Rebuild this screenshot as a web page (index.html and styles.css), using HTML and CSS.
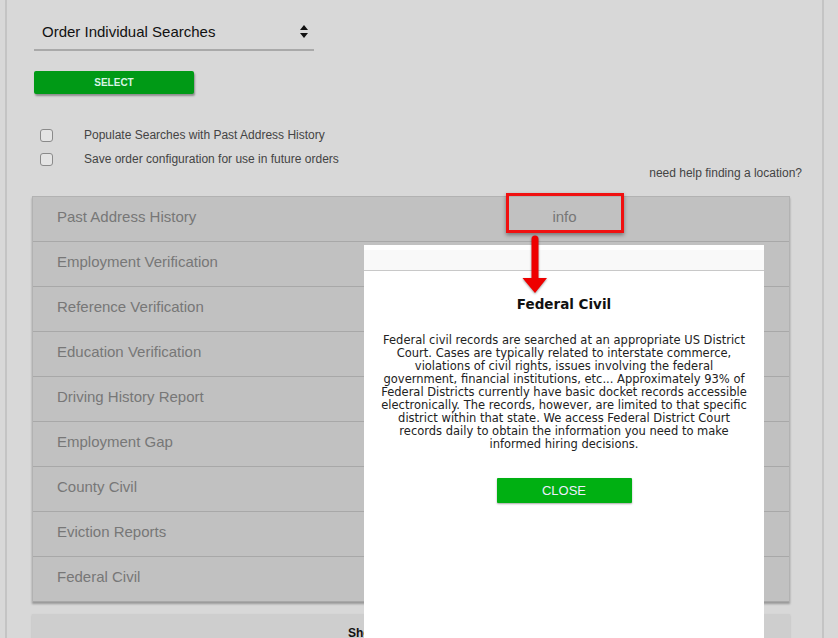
FILE: index.html
```html
<!DOCTYPE html>
<html lang="en">
<head>
  <meta charset="UTF-8" />
  <title>Order Searches</title>
  <link rel="stylesheet" href="styles.css">
</head>
<body>
  <div class="page">
    <div class="order-select">
      <span>Order Individual Searches</span>
      <svg class="select-arrows" width="8" height="13" viewBox="0 0 8 13">
        <path d="M4 0L8 5H0z M4 13L0 8h8z" fill="#111"/>
      </svg>
    </div>
    <button class="select-btn">SELECT</button>

    <div class="options">
      <label class="option"><span class="check"></span>Populate Searches with Past Address History</label>
      <label class="option"><span class="check"></span>Save order configuration for use in future orders</label>
    </div>
    <div class="help">need help finding a location?</div>

    <div class="searches">
      <div class="search-row"><span>Past Address History</span><span class="info">info</span></div>
      <div class="search-row"><span>Employment Verification</span></div>
      <div class="search-row"><span>Reference Verification</span></div>
      <div class="search-row"><span>Education Verification</span></div>
      <div class="search-row"><span>Driving History Report</span></div>
      <div class="search-row"><span>Employment Gap</span></div>
      <div class="search-row"><span>County Civil</span></div>
      <div class="search-row"><span>Eviction Reports</span></div>
      <div class="search-row"><span>Federal Civil</span></div>
    </div>

    <div class="summary">Show Order Summary</div>
  </div>

  <div class="modal">
    <div class="modal-head"></div>
    <h3 class="modal-title">Federal Civil</h3>
    <p class="modal-text">Federal civil records are searched at an appropriate US District Court. Cases are typically related to interstate commerce, violations of civil rights, issues involving the federal government, financial institutions, etc... Approximately 93% of Federal Districts currently have basic docket records accessible electronically. The records, however, are limited to that specific district within that state. We access Federal District Court records daily to obtain the information you need to make informed hiring decisions.</p>
    <button class="close-btn">CLOSE</button>
  </div>

  <div class="callout"></div>
  <svg class="callout-arrow" width="26" height="62" viewBox="0 0 26 62">
    <path d="M9.5 5a3.5 3.5 0 0 1 7 0V44h8.5L13 59 0.5 44h9z" fill="#ee0000"/>
  </svg>
</body>
</html>
```

FILE: styles.css
```css
body {
  margin: 0;
  background: #d8d8d8;
  font-family: 'Liberation Sans', Arial, sans-serif;
  overflow: hidden;
}
.page {
  margin-left: 5px;
  width: 758px;
  min-height: 700px;
  padding: 14px 32px 0 25px;
  border-left: 2px solid #c4c4c4;
  border-right: 2px solid #c4c4c4;
}
.order-select {
  margin-left: 2px;
  width: 264px;
  height: 35px;
  padding: 0 8px;
  border-bottom: 2px solid #a9a9a9;
  display: flex;
  align-items: center;
  justify-content: space-between;
  font-size: 15px;
  color: #111;
}
.select-arrows {
  margin-right: -2px;
}
.select-btn {
  display: block;
  margin: 20px 0 0 2px;
  width: 160px;
  height: 23px;
  border: none;
  border-radius: 2px;
  background: #009a16;
  color: #d8f4e4;
  font-family: 'Liberation Sans', Arial, sans-serif;
  font-size: 10px;
  font-weight: bold;
  box-shadow: 1px 2px 2px rgba(0,0,0,0.35);
}
.options {
  margin-top: 29px;
}
.option {
  display: flex;
  align-items: center;
  height: 24px;
  font-size: 12px;
  color: #444;
}
.check {
  width: 11px;
  height: 11px;
  margin: 0 31px 0 8px;
  border: 1px solid #8a8a8a;
  border-radius: 3px;
  background: #e4e4e4;
}
.help {
  margin: -7px -12px 0 0;
  line-height: 18px;
  text-align: right;
  font-size: 12px;
  color: #444;
}
.searches {
  margin-top: 14px;
  background: #c1c1c1;
  border: 1px solid #b2b2b2;
  border-bottom: none;
  box-shadow: 0 2px 2px rgba(0,0,0,0.3);
}
.search-row {
  display: grid;
  grid-template-columns: 307px 1fr;
  align-items: center;
  height: 39px;
  padding: 0 0 5px 24px;
  border-bottom: 1px solid #a8a8a8;
  font-size: 15px;
  color: #777;
}
.info {
  text-align: center;
  margin-left: -24px;
}
.summary {
  margin-top: 12px;
  height: 40px;
  padding-top: 12px;
  background: #cecece;
  box-shadow: 0 1px 2px rgba(0,0,0,0.15);
  text-align: center;
  font-size: 12px;
  font-weight: bold;
  color: #111;
  box-sizing: border-box;
}
.callout {
  position: absolute;
  left: 506px;
  top: 193px;
  width: 112px;
  height: 34px;
  border: 3px solid #f01010;
  box-shadow: 0 2px 4px rgba(0,0,0,0.4);
}
.callout-arrow {
  position: absolute;
  left: 522px;
  top: 234px;
  filter: drop-shadow(0 1px 1px rgba(0,0,0,0.4));
}
.modal {
  position: absolute;
  left: 364px;
  top: 245px;
  width: 400px;
  height: 420px;
  background: #fff;
  text-align: center;
}
.modal-head {
  height: 20px;
  margin-top: 5px;
  background: #f9f9f9;
  border-bottom: 1px solid #c8c8c8;
}
.modal-title {
  margin: 25px 0 0;
  font-family: 'DejaVu Sans', Verdana, sans-serif;
  font-size: 13.5px;
  font-weight: bold;
  color: #111;
}
.modal-text {
  margin: 22px 17px 0;
  font-family: 'DejaVu Sans', Verdana, sans-serif;
  font-size: 11.5px;
  line-height: 13px;
  color: #222;
}
.close-btn {
  margin-top: 27px;
  width: 135px;
  height: 25px;
  border: none;
  border-radius: 1px;
  background: #00b012;
  color: #eef;
  font-family: 'Liberation Sans', Arial, sans-serif;
  font-size: 13px;
  box-shadow: 0 1px 2px rgba(0,0,0,0.35);
}
```
